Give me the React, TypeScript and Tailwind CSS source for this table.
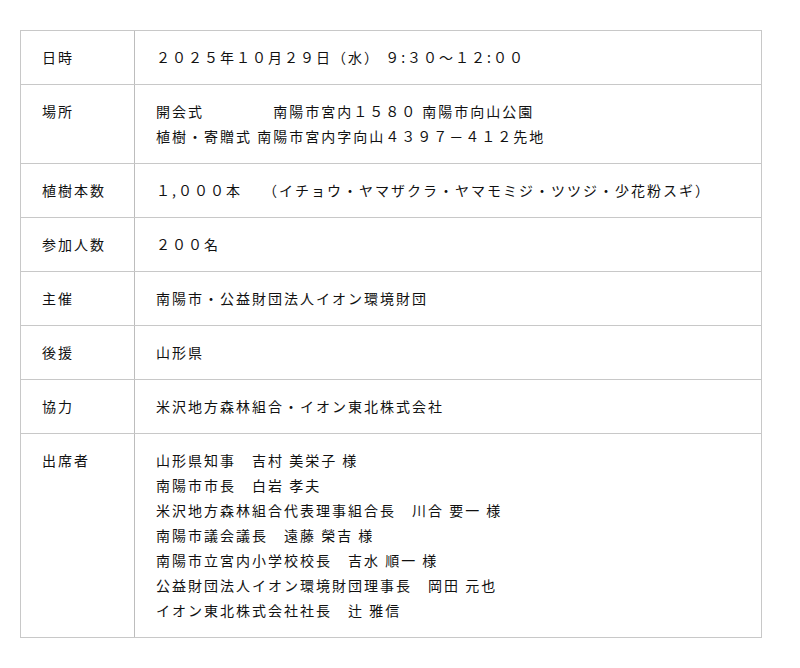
import React from "react";

const rows: { label: string; lines: string[] }[] = [
  { label: "日時", lines: ["２０２５年１０月２９日（水） ９:３０～１２:００"] },
  {
    label: "場所",
    lines: [
      "開会式　　　　 南陽市宮内１５８０ 南陽市向山公園",
      "植樹・寄贈式 南陽市宮内字向山４３９７－４１２先地",
    ],
  },
  { label: "植樹本数", lines: ["１,０００本　 （イチョウ・ヤマザクラ・ヤマモミジ・ツツジ・少花粉スギ）"] },
  { label: "参加人数", lines: ["２００名"] },
  { label: "主催", lines: ["南陽市・公益財団法人イオン環境財団"] },
  { label: "後援", lines: ["山形県"] },
  { label: "協力", lines: ["米沢地方森林組合・イオン東北株式会社"] },
  {
    label: "出席者",
    lines: [
      "山形県知事　吉村 美栄子 様",
      "南陽市市長　白岩 孝夫",
      "米沢地方森林組合代表理事組合長　川合 要一 様",
      "南陽市議会議長　遠藤 榮吉 様",
      "南陽市立宮内小学校校長　吉水 順一 様",
      "公益財団法人イオン環境財団理事長　岡田 元也",
      "イオン東北株式会社社長　辻 雅信",
    ],
  },
];

export default function App() {
  return (
    <div
      className="min-h-[668px] w-[800px] bg-white pt-[30px] pl-[20px] text-[14px] leading-[25px] text-[#111] tracking-[2px]"
      style={{ fontFamily: '"Noto Sans CJK JP", "Noto Sans", sans-serif' }}
    >
      <div className="w-[742px] border-t border-l border-r border-[#c8c8c8]">
        {rows.map((r) => (
          <div key={r.label} className="grid grid-cols-[114px_1fr] border-b border-[#c8c8c8]">
            <div className="border-r border-[#bdbdbd] py-[14px] pl-[21px]">{r.label}</div>
            <div className="py-[14px] pl-[21px] whitespace-pre">
              {r.lines.map((l, i) => (
                <div key={i}>{l}</div>
              ))}
            </div>
          </div>
        ))}
      </div>
    </div>
  );
}
